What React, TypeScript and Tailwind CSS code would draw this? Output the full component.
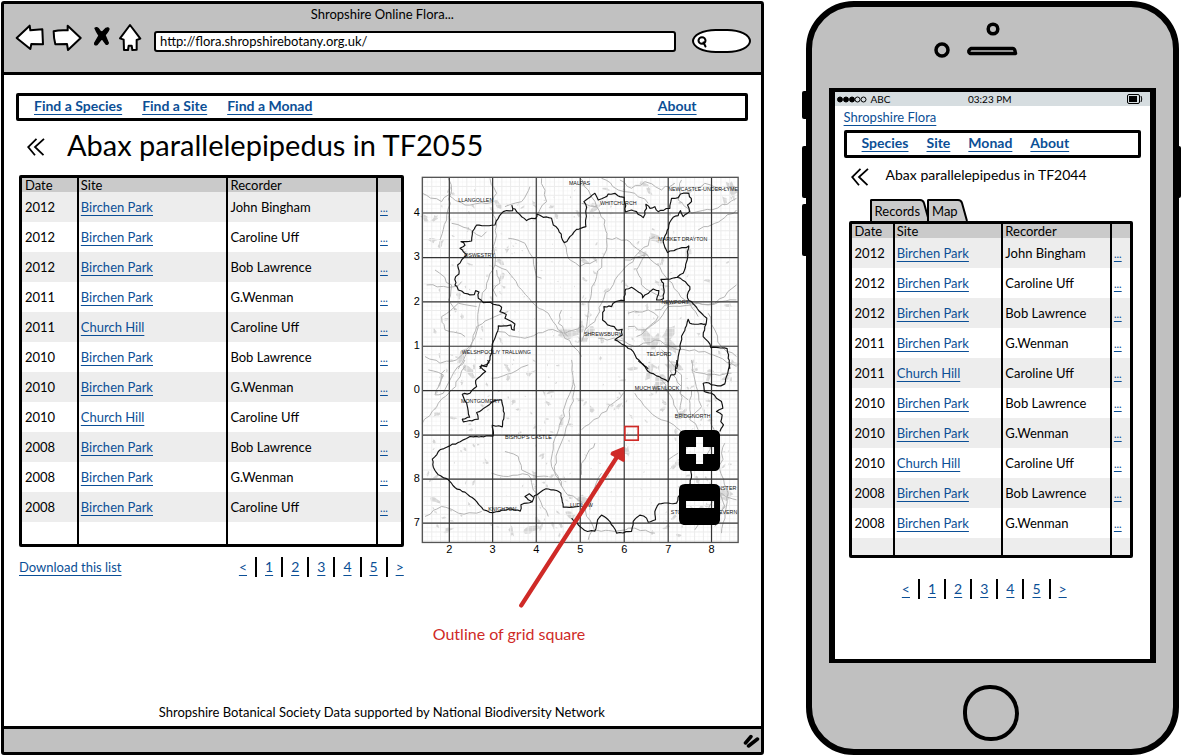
import type { ReactNode } from "react";

type Row = [string, string, string];

const records: Row[] = [
  ["2012", "Birchen Park", "John Bingham"],
  ["2012", "Birchen Park", "Caroline Uff"],
  ["2012", "Birchen Park", "Bob Lawrence"],
  ["2011", "Birchen Park", "G.Wenman"],
  ["2011", "Church Hill", "Caroline Uff"],
  ["2010", "Birchen Park", "Bob Lawrence"],
  ["2010", "Birchen Park", "G.Wenman"],
  ["2010", "Church Hill", "Caroline Uff"],
  ["2008", "Birchen Park", "Bob Lawrence"],
  ["2008", "Birchen Park", "G.Wenman"],
  ["2008", "Birchen Park", "Caroline Uff"],
];

function Link({ children, className = "" }: { children: ReactNode; className?: string }) {
  return (
    <a
      href="#"
      className={`text-[#0b4f96] underline decoration-1 underline-offset-[3px] [text-decoration-skip-ink:none] ${className}`}
    >
      {children}
    </a>
  );
}

function RecordsTable({ rows, dateCol, siteCol, recorderCol, tail, line }: {
  rows: Row[];
  dateCol: string;
  siteCol: string;
  recorderCol: string;
  tail: string;
  line: string;
}) {
  return (
    <div className="rounded-[2px] border-[3px] border-black">
      <table className="w-full table-fixed border-separate border-spacing-0 text-left text-[13px] leading-4">
        <colgroup>
          <col className={dateCol} />
          <col className={siteCol} />
          <col className={recorderCol} />
          <col />
        </colgroup>
        <thead>
          <tr className="h-[14px] bg-[#cacaca] leading-[14px]">
            <th scope="col" className={`pl-[3px] font-normal ${line}`}>Date</th>
            <th scope="col" className={`pl-[2px] font-normal ${line}`}>Site</th>
            <th scope="col" className={`pl-[2px] font-normal ${line}`}>Recorder</th>
            <td />
          </tr>
        </thead>
        <tbody>
          {rows.map(([date, site, recorder], i) => (
            <tr key={i} className="h-[30px] odd:bg-[#ededed]">
              <td className={`pl-[3px] ${line}`}>{date}</td>
              <td className={`pl-[2px] ${line}`}><Link>{site}</Link></td>
              <td className={`pl-[2px] ${line}`}>{recorder}</td>
              <td className="pl-[2px]"><Link className="text-[11px]">...</Link></td>
            </tr>
          ))}
          <tr className={`odd:bg-[#ededed] ${tail}`}>
            <td className={line} />
            <td className={line} />
            <td className={line} />
            <td />
          </tr>
        </tbody>
      </table>
    </div>
  );
}

function Pagination() {
  return (
    <nav aria-label="Pages" className="flex h-5 items-center gap-2 text-sm leading-4">
      {["<", "1", "2", "3", "4", "5", ">"].map((label, i) => (
        <span key={label} className="flex items-center gap-2">
          {i > 0 && <span className="h-5 w-[2px] bg-black" />}
          <Link>{label}</Link>
        </span>
      ))}
    </nav>
  );
}

function BackChevron() {
  return (
    <button type="button" aria-label="Back" className="block">
      <svg viewBox="0 0 18 18" className="h-[18px] w-[18px]" fill="none" stroke="#000" strokeWidth="1.8">
        <path d="M9.5 .8L1.2 9l6.8 8.2M17 .8L8 9l8.5 8.2" />
      </svg>
    </button>
  );
}

/* Fixed-seed generator, so the terrain stays put between renders. */
function makeRandom(start: number) {
  let seed = start;
  return () => {
    seed = (seed * 16807) % 2147483647;
    return seed / 2147483647;
  };
}

/* Breaks every segment of a polyline into short, slightly displaced steps. */
function roughen(d: string, step: number, amount: number): string {
  const next = makeRandom(d.length * 31 + 7);
  return d
    .split("M")
    .filter(Boolean)
    .map((part) => {
      const n = part.split(/[L ]/).map(Number);
      let out = `M${n[0]} ${n[1]}`;
      for (let i = 2; i < n.length; i += 2) {
        const [x0, y0, x1, y1] = [n[i - 2], n[i - 1], n[i], n[i + 1]];
        const pieces = Math.max(1, Math.round(Math.hypot(x1 - x0, y1 - y0) / step));
        for (let k = 1; k < pieces; k++) {
          const x = x0 + ((x1 - x0) * k) / pieces + (next() - 0.5) * amount;
          const y = y0 + ((y1 - y0) * k) / pieces + (next() - 0.5) * amount;
          out += `L${x.toFixed(1)} ${y.toFixed(1)}`;
        }
        out += `L${x1} ${y1}`;
      }
      return out;
    })
    .join("");
}

/* Map drawing, in two halves that share a horizontal scale of three units per pixel. */
const borderNorth = roughen(
  "M195 597L200 585 215 590 225 570 230 540 235 515 245 490 250 468 275 468 288 465 290 478 298 481 300 462 290 455 270 445 274 434 255 425 260 412 245 405 235 403 226 397 205 398 190 385 192 366 182 362 178 374 165 375 148 370 130 360 120 345 122 320 132 312 128 285 140 270 155 255 145 245 135 235 150 226 138 215 170 213 172 185 185 165 240 165 250 145 265 125 293 122 291 107 305 125 320 140 335 152 350 145 362 146 366 132 385 142 410 145 415 165 430 178 448 218 465 200 485 178 513 170 515 112 507 95 525 82 540 70 550 90 570 82 580 72 600 70 615 80 628 82 632 126 650 120 665 125 685 143 695 115 693 103 705 115 720 110 730 125 765 115 770 85 790 83 797 72 822 70 830 95 818 105 824 125 805 140 797 122 790 137 775 142 762 165 755 190 745 215 758 248 785 238 822 228 818 265 812 292 805 310 787 322 765 328 738 328 746 340 746 386 725 390 732 362 715 357 705 365 690 375 683 384 678 370 665 362 650 352 632 358 628 392 603 395 590 410 567 410 563 450 578 465 598 470 605 480 622 478 622 495 600 510 620 522 635 530 655 545 665 565 680 580 700 597M787 322L805 332 825 350 818 384 830 395 845 412 860 430 876 445 874 462 850 463 825 460 820 448 805 490 797 520 790 560 785 597M874 462L865 500 880 515 888 533 937 536 940 565 945 597",
  9, 5);
const borderSouth = roughen(
  "M670 2L690 20 700 35 725 48 740 55 760 66 768 45 780 44 786 0M945 12L935 50 930 72 918 78 890 75 875 68 865 70 868 95 890 100 905 115 920 125 924 145 905 155 922 165 918 185 926 195 915 215M830 325L826 372 795 405 785 430 732 432 720 455 722 480 700 487 695 475 675 466 655 485 650 515 605 520 595 500 580 480 560 466 548 480 540 514 518 515 495 500 470 475M492 440L445 442 438 400 425 392 393 387 375 398 358 408 352 426 340 420 330 410 343 402 355 412M352 426L335 430 318 435 316 454 290 448 225 458 205 450 180 420 150 397 120 383 100 360 70 345 55 322 52 298 70 275 95 262 145 240 165 230 234 229 232 196 262 201 268 160 260 120 240 122 215 140 185 158 190 178 145 186 142 178 164 172 155 130 142 103 165 100 185 80 182 62 212 35 195 20 222 8 218 0",
  9, 4);
const roadsNorth = roughen(
  "M22 70L80 95 100 75 150 105 230 98 245 70 225 25M232 100L245 165 235 230 240 285 215 340 195 400 190 470 150 560 130 597M240 285L275 300 310 350 350 395 400 430 430 480 470 525 500 560M495 25L520 60 545 110 570 150 575 240 545 320 520 400 515 470 500 515M545 110L500 100M575 205L635 210 680 245 720 280 760 330 810 390 850 440M720 200L660 260 600 330 560 400 540 455 510 480M30 560L75 580 125 570 165 530 185 470 240 440 280 425M250 485L330 505 400 480 450 490 500 470M550 505L610 510 660 530 720 510 790 540 870 545 965 590M800 30L790 90 830 130 890 120 965 85M100 25L110 60 95 150 75 210M280 205L330 220 355 265 365 320 380 325M448 220L460 265 495 290 545 270M630 270L690 255 665 300 680 345 740 380M965 345L900 400 830 405 760 410 720 460 665 500M35 345L120 350 140 335M965 390L880 405 800 395 720 420M615 30L650 55 690 35 740 60 780 40M560 25L610 60 660 70 700 100M150 500L90 480 80 440 130 400 185 410M380 25L395 95 370 130M640 430L700 420 730 440 690 480 640 470M740 540L760 570 790 597M880 430L900 480 920 530 965 560M440 420L430 460 460 500M60 300L110 345 100 390 120 420M270 110L320 95 345 50M835 60L870 40 920 60 960 50M850 180L900 160 965 120M110 160L160 175 200 200 215 185M245 300L255 340 235 360 245 380",
  16, 9);
const roadsSouth = roughen(
  "M22 190L70 130 110 90 150 20M150 0L110 50 85 100 60 105 90 30M470 0L480 80 460 190 430 270 420 340 450 395 500 425 525 480 540 515M475 60L440 180 415 250 410 320 440 380M230 55L290 40 340 15M500 210L560 160 625 100M500 345L500 310 540 250M660 100L700 150 740 180 760 185 800 215M740 60L775 120 790 160 830 170 860 140 840 60 830 0M765 30L800 80 795 150M890 170L900 240 870 300M270 275L310 290 320 330 350 345 400 350M230 340L280 350 340 345 365 400 400 470M30 470L80 440 130 460 200 455M540 510L600 515 660 505 720 520M760 300L790 280M830 30L880 45 950 40M840 510L880 450 920 400 965 420M900 500L930 440 910 380M560 340L530 400 525 450M520 540L530 515M780 30L800 45 795 100 820 120M40 30L85 45 70 80M830 90L825 180 850 210M930 250L915 330 940 400 920 520",
  16, 9);

const clusters: [number, number, number][] = [
  [455, 490, 26], [495, 475, 18], [520, 490, 18], [505, 510, 14], [545, 110, 16], [720, 205, 20], [695, 500, 30],
  [725, 510, 24], [760, 490, 28], [770, 530, 26], [60, 145, 14], [30, 143, 14], [950, 60, 24], [930, 90, 14],
  [820, 245, 16], [510, 275, 16], [540, 268, 10], [255, 275, 14], [955, 580, 16], [730, 640, 30], [700, 610, 20],
  [775, 590, 22], [635, 845, 16], [800, 735, 18], [510, 990, 22], [470, 1040, 18], [930, 970, 28], [800, 990, 16],
  [60, 990, 14], [400, 700, 12], [160, 605, 18], [860, 1020, 16], [250, 105, 14], [885, 610, 18], [230, 385, 10],
  [440, 750, 16], [345, 610, 14], [100, 1080, 16], [350, 1080, 18], [290, 1085, 14], [910, 870, 16], [140, 560, 20],
];

function makePatches(): string {
  const next = makeRandom(4127);
  const patch = (cx: number, cy: number, r: number) => {
    const tilt = next() * 3;
    const points: string[] = [];
    for (let i = 0; i < 10; i++) {
      const a = (i / 10) * Math.PI * 2;
      const d = r * (0.4 + next() * 0.85);
      const [px, py] = [Math.cos(a) * d * 1.3, Math.sin(a) * d * 0.6];
      points.push(`${Math.round(cx + px * Math.cos(tilt) - py * Math.sin(tilt))} ${Math.round(cy + px * Math.sin(tilt) + py * Math.cos(tilt))}`);
    }
    return `M${points.join("L")}Z`;
  };
  const out = clusters.map(([x, y, r]) => patch(x, y, r));
  for (let i = 0; i < 420; i++) {
    const x = 38 + next() * 915;
    const y = 38 + next() * 1062;
    const open = (x > 280 && x < 480 && y > 150 && y < 560) || (x > 500 && x < 760 && y > 760 && y < 1060);
    out.push(patch(x, y, open ? 2.5 : 3 + next() * next() * 12));
  }
  return out.join("");
}
const patches = makePatches();

const towns: [string, number, number][] = [
  ["MALPAS", 462, 45], ["NEWCASTLE-UNDER-LYME", 760, 63], ["LLANGOLLEN", 130, 96], ["WHITCHURCH", 555, 106],
  ["MARKET DRAYTON", 730, 213], ["OSWESTRY", 148, 261], ["NEWPORT", 740, 401], ["SHREWSBURY", 507, 497],
  ["WELSHPOOL/Y TRALLWNG", 140, 552], ["TELFORD", 695, 559], ["MUCH WENLOCK", 660, 660], ["MONTGOMERY", 138, 700],
  ["BRIDGNORTH", 780, 745], ["BISHOP'S CASTLE", 270, 806], ["KNIGHTON", 220, 1025], ["LUDLOW", 465, 1012],
  ["KIDDERMINSTER", 832, 962], ["STOURPORT-ON-SEVERN", 768, 1032],
];

const columns = [103, 233, 364, 496, 628, 760, 890];
const lines = [129, 263, 396, 529, 662, 796, 928, 1060];
const minor = Array.from({ length: 82 }, (_, i) => i);

function FloraMap() {
  return (
    <figure>
      <div className="relative">
        <svg viewBox="-12 15 1011 1305" className="block w-full" role="img" aria-label="Shropshire map">
          <rect x="22" y="22" width="948" height="1096" fill="#fff" />
          <path d={patches} fill="#d6d6d6" />
          <g stroke="#ececec">
            {minor.filter((i) => 24 + i * 13.15 < 965).map((i) => (
              <line key={`v${i}`} x1={24 + i * 13.15} x2={24 + i * 13.15} y1="22" y2="1118" strokeWidth={i % 2 ? 1 : 3} />
            ))}
            {minor.map((i) => 36 + i * 13.3).filter((y) => y < 1115).map((y, i) => (
              <line key={`h${i}`} y1={y} y2={y} x1="22" x2="970" strokeWidth={i % 2 ? 3 : 1} />
            ))}
          </g>
          <g fill="none" stroke="#b4b4b4" strokeWidth="3" strokeLinejoin="round">
            <path d={roadsNorth} />
            <path d={roadsSouth} transform="translate(0 570)" />
          </g>
          <g stroke="#333" strokeWidth="3.5">
            {columns.map((x) => <line key={x} x1={x} x2={x} y1="22" y2="1118" />)}
            {lines.map((y) => <line key={y} y1={y} y2={y} x1="22" x2="970" />)}
          </g>
          <rect x="22" y="22" width="948" height="1096" fill="none" stroke="#555" strokeWidth="4" />
          <g fill="none" stroke="#111" strokeWidth="3.5" strokeLinejoin="round">
            <path d={borderNorth} />
            <path d={borderSouth} transform="translate(0 570)" />
          </g>
          <g fontFamily="Liberation Sans, sans-serif" fontSize="16" fill="#111">
            {towns.map(([name, x, y]) => <text key={name} x={x} y={y}>{name}</text>)}
          </g>
          <g fontFamily="Liberation Sans, sans-serif" fontSize="33" fill="#000" textAnchor="middle">
            {columns.map((x, i) => <text key={x} x={x} y="1149">{i + 2}</text>)}
            {lines.map((y, i) => <text key={y} x="5" y={y + 8}>{[4, 3, 2, 1, 0, 9, 8, 7][i]}</text>)}
          </g>
          <rect x="630" y="770" width="40" height="41" fill="none" stroke="#cf2a27" strokeWidth="5" />
          <path d="M319 1307L606 862" stroke="#cf2a27" strokeWidth="13" strokeLinecap="round" />
          <path d="M628 830L590 846Q583 856 592 858L624 876Q630 877 630 870Z" fill="#cf2a27" />
        </svg>
        <button type="button" aria-label="Zoom in" className="absolute top-[58.6%] left-[79.5%] w-[12.2%]">
          <svg viewBox="0 0 41 41" className="block w-full">
            <path
              fillRule="evenodd"
              d="M6 0H35Q41 0 41 6V35Q41 41 35 41H6Q0 41 0 35V6Q0 0 6 0ZM17 7V17H7V24H17V34H24V24H35V17H24V7Z"
            />
          </svg>
        </button>
        <button type="button" aria-label="Zoom out" className="absolute top-[71.1%] left-[79.5%] w-[12.2%]">
          <svg viewBox="0 0 41 41" className="block w-full">
            <path
              fillRule="evenodd"
              d="M6 0H35Q41 0 41 6V35Q41 41 35 41H6Q0 41 0 35V6Q0 0 6 0ZM7 17V24H35V17Z"
            />
          </svg>
        </button>
      </div>
      <figcaption className="mt-[14px] pl-[22px] text-base leading-5 text-[#cf2a27]">Outline of grid square</figcaption>
    </figure>
  );
}

function ToolbarIcon({ label, viewBox, className, children }: {
  label: string;
  viewBox: string;
  className: string;
  children: ReactNode;
}) {
  return (
    <button type="button" aria-label={label} className={`h-[30px] shrink-0 ${className}`}>
      <svg viewBox={viewBox} className="h-full w-full" fill="#fff" stroke="#000" strokeWidth="6" strokeLinejoin="round" strokeLinecap="round">
        {children}
      </svg>
    </button>
  );
}

function BrowserWindow() {
  return (
    <section className="flex min-w-0 flex-1 flex-col rounded-[3px] border-[3px] border-black bg-white">
      <header className="h-[71px] border-b-[3px] border-black bg-[#c1c1c1]">
        <p className="pt-px text-center text-[13px] leading-[18px]">Shropshire Online Flora...</p>
        <div className="flex items-center pr-[10px] pl-[11px]">
          <ToolbarIcon label="Back" viewBox="45 70 90 90" className="w-[30px]">
            <path d="M50 115L89 78 91 92 127 89 129 134 94 133 91 148Z" />
          </ToolbarIcon>
          <ToolbarIcon label="Forward" viewBox="156 70 90 90" className="ml-[7px] w-[30px]">
            <path d="M161 95Q178 90 203 92V78L242 115 204 151 201 133 166 134Q161 115 161 95Z" />
          </ToolbarIcon>
          <ToolbarIcon label="Stop" viewBox="273 70 60 90" className="ml-[9px] w-[20px]">
            <path fill="#000" strokeWidth="4" d="M285 86Q290 81 296 88Q302 98 307 97L318 86Q325 82 327 88Q326 94 315 106Q320 118 325 130Q322 137 317 132L306 117Q300 124 291 135Q283 138 284 130L297 108Q288 94 285 86Z" />
          </ToolbarIcon>
          <ToolbarIcon label="Home" viewBox="354 70 72 90" className="ml-[7px] w-[24px]">
            <path d="M390 76L360 116 371 120 372 151 384 151 386 138H395L397 151 410 150V121L421 117Z" />
          </ToolbarIcon>
          <input
            aria-label="Address"
            defaultValue="http://flora.shropshirebotany.org.uk/"
            className="mt-[6px] ml-3 h-[21px] min-w-0 flex-1 rounded-[3px] border-[2px] border-black bg-white px-1 text-[13px] leading-4 outline-none"
          />
          <label className="mt-[6px] ml-4 flex h-6 w-[59px] items-center rounded-[40%/50%] border-[2px] border-black bg-white pl-[2px]">
            <svg viewBox="0 0 12 13" className="h-[13px] w-3 shrink-0" fill="none" stroke="#000" strokeWidth="2">
              <ellipse cx="6" cy="5.500" rx="3.500" ry="3.300" />
              <path d="M7.500 7.500L9.500 11.500" strokeLinecap="round" />
            </svg>
            <input type="search" aria-label="Search" className="w-8 min-w-0 bg-transparent outline-none" />
          </label>
        </div>
      </header>
      <main className="flex flex-1 flex-col pt-[18px] pr-[13px] pl-3">
        <nav aria-label="Main" className="h-7 rounded-[2px] border-[3px] border-black">
          <div className="flex gap-5 pr-[48px] pl-[15px] text-[14px] leading-[19px] font-bold">
            <Link>Find a Species</Link>
            <Link>Find a Site</Link>
            <Link>Find a Monad</Link>
            <Link className="ml-auto">About</Link>
          </div>
        </nav>
        <div className="flex h-[54px] items-center gap-[22px] pb-[6px] pl-[11px]">
          <div className="pt-1"><BackChevron /></div>
          <h1 className="text-[29px] leading-9">Abax parallelepipedus in TF2055</h1>
        </div>
        <div className="grid grid-cols-[395fr_337fr] items-start">
          <div className="pr-[7px] pl-[3px]">
            <RecordsTable
              rows={records}
              dateCol="w-[15%]"
              siteCol="w-[39.5%]"
              recorderCol="w-[39.5%]"
              tail="h-[22px]"
              line="border-r-[2px] border-black"
            />
            <div className="mt-[10px] flex items-center justify-between">
              <Link className="text-[13px] leading-4">Download this list</Link>
              <Pagination />
            </div>
          </div>
          <FloraMap />
        </div>
        <p className="mt-auto pt-4 pb-[4px] text-center text-[13px] leading-5">
          Shropshire Botanical Society Data supported by National Biodiversity Network
        </p>
      </main>
      <footer className="flex h-[26px] items-center justify-end border-t-[3px] border-black bg-[#c1c1c1] pr-px">
        <svg viewBox="0 0 17 14" className="h-[14px] w-[17px]" stroke="#000" strokeLinecap="round">
          <path d="M2.500 9L8 2.500M5.500 12L14.500 5" strokeWidth="3.500" />
        </svg>
      </footer>
    </section>
  );
}

function Tab({ label, selected }: { label: string; selected: boolean }) {
  return (
    <button type="button" role="tab" aria-selected={selected} className="-mr-[3px] flex h-[22px]">
      <span className="h-full rounded-tl-[2px] border-t-[2px] border-l-[2px] border-black bg-[#cacaca] pl-[3px] text-[13px] leading-5">
        {label}
      </span>
      <svg viewBox="0 0 10 22" className="h-full w-[10px]" stroke="#000" strokeWidth="2">
        <path d="M0 1Q3 1 4 4L9 22H0Z" fill="#cacaca" stroke="none" />
        <path d="M0 1Q3 1 4 4L9 22" fill="none" />
      </svg>
    </button>
  );
}

function Phone() {
  return (
    <section className="relative ml-[42px] w-[31.7%] shrink-0">
      <span className="absolute top-[90px] -left-1 h-7 w-2 rounded-[2px] bg-black" />
      <span className="absolute top-[145px] -left-1 h-[52px] w-2 rounded-[2px] bg-black" />
      <span className="absolute top-[203px] -left-1 h-[52px] w-2 rounded-[2px] bg-black" />
      <span className="absolute top-[145px] -right-[2px] h-[52px] w-2 rounded-[2px] bg-black" />
      <div className="relative flex h-full flex-col rounded-[48px] border-[6px] border-black bg-[#c0c0c0] px-[17px]">
        <svg viewBox="0 0 84 38" className="mt-[14px] ml-[105px] h-[38px] w-[84px]" fill="none" stroke="#000" strokeWidth="3.500">
          <circle cx="59" cy="8" r="4.800" />
          <circle cx="8" cy="29" r="6" />
          <path d="M37 27.500H79Q81 27.500 81.500 32.500H36Q33 30 37 27.500Z" strokeLinejoin="round" />
        </svg>
        <div className="mt-[29px] flex flex-1 flex-col border-x-[6px] border-y-4 border-black bg-white">
          <div className="flex h-[14px] items-center bg-[#d6dde0] text-[10px] leading-3">
            <span className="flex flex-1 items-center gap-1 pl-[2px]">
              <svg viewBox="0 0 30 7" className="h-[7px] w-[30px]" stroke="#000">
                <circle cx="3" cy="3.500" r="2.500" /><circle cx="9" cy="3.500" r="2.500" /><circle cx="15" cy="3.500" r="2.500" />
                <circle cx="20.500" cy="3.500" r="2.500" fill="none" /><circle cx="26.500" cy="3.500" r="2.500" fill="none" />
              </svg>
              ABC
            </span>
            <span>03:23 PM</span>
            <span className="flex flex-1 justify-end pr-[7px]">
              <svg viewBox="0 0 16 10" className="h-[10px] w-4" fill="none" stroke="#000">
                <rect x="0.500" y="0.500" width="12" height="9" rx="1.500" />
                <rect x="2" y="2" width="8" height="6" fill="#000" stroke="none" />
                <path d="M14 2Q15.500 5 14 8" />
              </svg>
            </span>
          </div>
          <div className="flex flex-col px-[9px]">
            <Link className="mt-[3px] self-start text-[13px] leading-4">Shropshire Flora</Link>
            <nav aria-label="Phone" className="mt-[5px] h-7 rounded-[2px] border-[3px] border-black">
              <div className="flex gap-[18px] pl-[15px] text-[14px] leading-5 font-bold">
                <Link>Species</Link>
                <Link>Site</Link>
                <Link>Monad</Link>
                <Link>About</Link>
              </div>
            </nav>
            <div className="flex h-[37px] items-center gap-[17px] pl-[7px]">
              <BackChevron />
              <h2 className="pb-1 text-sm leading-5">Abax parallelepipedus in TF2044</h2>
            </div>
            <div role="tablist" className="mt-1 flex pl-[26px]">
              <Tab label="Records" selected />
              <Tab label="Map" selected={false} />
            </div>
            <div className="mr-2 ml-[5px]">
              <RecordsTable
                rows={records.slice(0, 10)}
                dateCol="w-[15.5%]"
                siteCol="w-[39%]"
                recorderCol="w-[39%]"
                tail="h-[17px]"
                line="border-r-[2px] border-black"
              />
            </div>
            <div className="mt-[21px] flex justify-center pr-[16px]">
              <Pagination />
            </div>
          </div>
        </div>
        <button type="button" aria-label="Home" className="mt-[22px] mb-2 ml-[134px] h-[56px] w-[56px] rounded-[48%_52%_50%_50%] border-[4px] border-black" />
      </div>
    </section>
  );
}

export default function App() {
  return (
    <div className="flex min-h-screen bg-white py-px pr-[2px] pl-px font-[Lato,sans-serif] text-black">
      <BrowserWindow />
      <Phone />
    </div>
  );
}
